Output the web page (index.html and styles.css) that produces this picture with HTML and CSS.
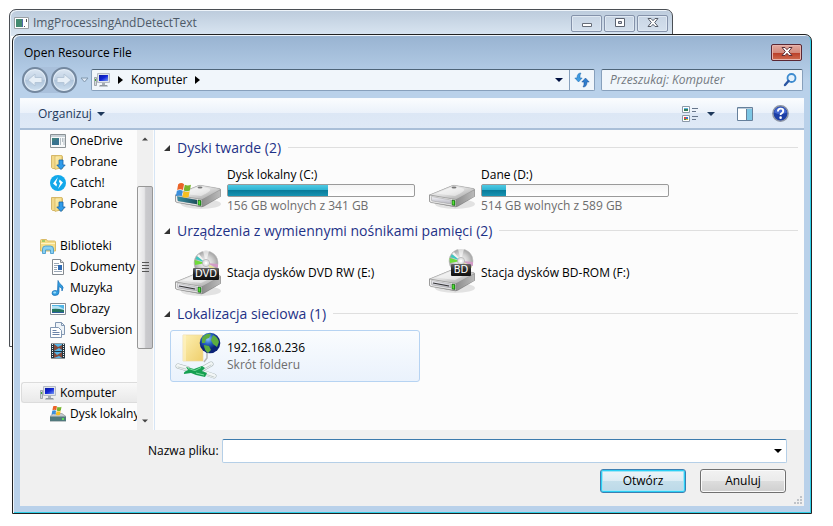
FILE: index.html
```html
<!DOCTYPE html>
<html lang="pl">
<head>
<meta charset="utf-8">
<title>Open Resource File</title>
<link rel="stylesheet" href="styles.css">
</head>
<body>
<svg class="defs" aria-hidden="true">
  <defs>
    <linearGradient id="metal" x1="0" y1="0" x2="1" y2="1"><stop offset="0" stop-color="#fafafa"/><stop offset=".5" stop-color="#dcdcdc"/><stop offset="1" stop-color="#999"/></linearGradient>
    <linearGradient id="side" x1="0" y1="0" x2="1" y2="0"><stop offset="0" stop-color="#8d8d8d"/><stop offset="1" stop-color="#bbb"/></linearGradient>
    <linearGradient id="face" x1="0" y1="0" x2="0" y2="1"><stop offset="0" stop-color="#f4f4f8"/><stop offset="1" stop-color="#b4b4be"/></linearGradient>
    <linearGradient id="teal" x1="0" y1="0" x2="1" y2="0"><stop offset="0" stop-color="#3a90a4"/><stop offset="1" stop-color="#1d4f5c"/></linearGradient>
    <linearGradient id="gold" x1="0" y1="0" x2="1" y2="1"><stop offset="0" stop-color="#fdf0b4"/><stop offset="1" stop-color="#efcf6c"/></linearGradient>
    <linearGradient id="screen" x1="0" y1="0" x2="1" y2="1"><stop offset="0" stop-color="#0a1a9c"/><stop offset=".5" stop-color="#1226d8"/><stop offset="1" stop-color="#7a9cf4"/></linearGradient>
    <radialGradient id="disc-fill"><stop offset="0" stop-color="#fff"/><stop offset=".6" stop-color="#cfcfcf"/><stop offset="1" stop-color="#a2a2a2"/></radialGradient>
    <radialGradient id="sea" cx=".4" cy=".3"><stop offset="0" stop-color="#8fc8fa"/><stop offset=".5" stop-color="#2866c8"/><stop offset="1" stop-color="#0b2377"/></radialGradient>
    <linearGradient id="label" x1="0" y1="0" x2="0" y2="1"><stop offset="0" stop-color="#666"/><stop offset=".5" stop-color="#222"/><stop offset="1" stop-color="#111"/></linearGradient>

    <symbol id="computer" viewBox="0 0 16 16">
      <path d="M.5 5.500h2v8h-2z" fill="#d4d8dc" stroke="#848c92" stroke-width=".7"/><path d="M1 7h1v2H1z" fill="#3ea83c"/>
      <path d="M3.500 1.500h12v9h-12z" fill="#dfe4ea" stroke="#b4bac4"/><path d="M5 3h9v6H5z" fill="url(#screen)"/>
      <path d="M8 11h3v2H8z" fill="#a6adb5"/><path d="M6 13h7l1 1.500H5z" fill="#8f979f"/>
    </symbol>
    <symbol id="folder-down" viewBox="0 0 16 16">
      <path d="M1.500 1.500h9l2 1v12h-10l-1-1z" fill="#f3d98a" stroke="#d5b76a"/><path d="M5 2l7-.5v12l-7 2z" fill="url(#gold)" stroke="#d3b35b" stroke-width=".7"/>
      <path d="M9 6h4v5h2.200L11 15.600 6.800 11H9z" fill="#2f9bea" stroke="#1563a8" stroke-width=".8"/>
    </symbol>
    <symbol id="app" viewBox="0 0 16 16">
      <path d="M.5 1.500h15v13H.5z" fill="#f7f9fa" stroke="#8b9296"/><path d="M1 2h14v2H1z" fill="#c9d1d6"/>
      <path d="M2 5h7v7H2z" fill="#41817f"/><path d="M2 9l7-4v7H2z" fill="#2e61a4" opacity=".45"/>
      <path d="M10.500 5v7M12.500 5v4M14 5v7" stroke="#b4bec4"/>
    </symbol>
    <symbol id="winflag" viewBox="0 0 16 16">
      <path d="M3 2q3-2 5.500 0L7.500 7.500Q5 6 2 7.500z" fill="#ea6328"/><path d="M9.200 2.500q2.800 1.500 5.800 0L14 8q-3 1.500-5.800 0z" fill="#78b52c"/>
      <path d="M1.800 8.200q3-1.500 5.500 0L6.300 13.500Q4 12 .8 13.500z" fill="#3b8fdc"/><path d="M8 8.700q2.800 1.500 5.800 0L12.800 14Q10 15.500 7 14z" fill="#f8bf20"/>
    </symbol>
    <symbol id="drive" viewBox="0 0 48 48">
      <ellipse cx="27" cy="38" rx="20" ry="5" fill="#000" opacity=".1"/>
      <path d="M1 29L24 19.500q2-1 4 0L46 22.500q1 .5 1 2v6L30 40.500q-2 1-4 .5L3 36.500q-2-.5-2-2z" fill="#888"/>
      <path d="M1.500 29L24 19.800q2-.8 4-.3l17 3q2 .5 .5 1.500L29 33q-2 1-4 .5z" fill="url(#metal)" stroke="#aaa" stroke-width=".5"/>
      <path d="M8 27.500l17-7q8 1 11 2.500 2 2-9 7z" fill="#fff" opacity=".45"/><ellipse cx="26" cy="21.500" rx="2.500" ry=".9" fill="#777"/>
      <path d="M28 33.500l18.500-9.500v6.500L28 40.500z" fill="url(#side)"/>
      <path d="M1.500 29L28 33.500v7L3 36.500q-1.500-.5-1.500-2z" fill="#eee" stroke="#888" stroke-width=".6"/>
      <path d="M3.500 30.500L23 34v4L4.500 35q-1 0-1-1z" fill="url(#face)" stroke="#999" stroke-width=".5"/>
      <path d="M24 34l3 .5v5l-3-.5z" fill="#18a818" stroke="#245c1d" stroke-width=".6"/><path d="M25.200 35v3.500" stroke="#79f243"/>
    </symbol>
    <symbol id="disc" viewBox="0 0 26 26">
      <circle cx="13" cy="13" r="12" fill="url(#disc-fill)" stroke="#bbb" stroke-width=".6"/>
      <path d="M13 13L1.500 10l.5 5z" fill="#6fdc3b"/><path d="M13 13L4 6 2.500 9z" fill="#3dc7c0"/><path d="M13 13l-7-9-2 2z" fill="#f4f4f4"/><path d="M13 13l12 1v4z" fill="#d29bc6"/><path d="M13 13l11 6-3 4z" fill="#e6e095"/><path d="M13 13L10 1h6z" fill="#fff" opacity=".6"/>
      <circle cx="13" cy="13" r="3.600" fill="#e5e5e5" stroke="#aaa" stroke-width=".7"/><circle cx="13" cy="13" r="1.500" fill="#fff"/>
    </symbol>
  </defs>
</svg>

<section class="window back-window">
  <header class="back-title">
    <svg class="i16" viewBox="0 0 16 16"><path d="M.5 2.500h14v11H.5z" fill="#fff" stroke="#9aa0a5"/><path d="M2 4h6v8H2z" fill="#438a70"/><path d="M8 4h1v8H8z" fill="#5269a9"/><path d="M10 11h1v1h-1zM12 4h1v3h-1z" fill="#555"/></svg>
    <span>ImgProcessingAndDetectText</span>
    <div class="caption-buttons">
      <button aria-label="Minimalizuj"><svg viewBox="0 0 16 14"><path d="M3.500 7.500h9v3h-9z" fill="#fff" stroke="#666d78"/></svg></button>
      <button aria-label="Maksymalizuj"><svg viewBox="0 0 16 14"><path d="M3.500 2.500h9v8h-9z" fill="#fff" stroke="#5c6370"/><path d="M6.500 5.500h3v2h-3z" fill="#ccd" stroke="#5c6370"/></svg></button>
      <button aria-label="Zamknij"><svg viewBox="0 0 16 14"><path d="M3 2.500h3l2 2.200 2-2.200h3L9.700 6.500l3.300 4h-3L8 8.300 6 10.500H3l3.300-4z" fill="#fff" stroke="#555c68"/></svg></button>
    </div>
  </header>
</section>

<section class="window dialog" role="dialog" aria-labelledby="dialog-title">
  <header class="dialog-title">
    <h1 id="dialog-title">Open Resource File</h1>
    <button class="close" aria-label="Zamknij"><svg viewBox="0 0 16 14"><path d="M3 2.500h3l2 2.200 2-2.200h3L9.700 6.500l3.300 4h-3L8 8.300 6 10.500H3l3.300-4z" fill="#fff" stroke="#5d3038"/></svg></button>
  </header>

  <div class="navigation">
    <div class="travel">
      <button class="round" aria-label="Wstecz"><svg viewBox="0 0 16 16"><path d="M1 8l7-6v3.500h7v5H8V14z" fill="#e7eff7" stroke="#b5c6d8"/></svg></button>
      <button class="round" aria-label="Dalej"><svg viewBox="0 0 16 16"><path d="M15 8L8 2v3.500H1v5h7V14z" fill="#e7eff7" stroke="#b5c6d8"/></svg></button>
    </div>
    <button class="recent" aria-label="Ostatnie strony"><svg viewBox="0 0 9 6"><path d="M1 1h7L4.500 5z" fill="#dfeaf6" stroke="#8298ae"/></svg></button>
    <div class="address">
      <svg class="i16"><use href="#computer"/></svg>
      <svg class="crumb" viewBox="0 0 5 8"><path d="M0 0l5 4-5 4z"/></svg>
      <a href="#">Komputer</a>
      <svg class="crumb" viewBox="0 0 5 8"><path d="M0 0l5 4-5 4z"/></svg>
      <button class="history" aria-label="Poprzednie lokalizacje"><svg viewBox="0 0 8 4"><path d="M0 0h8L4 4z" fill="#001040"/></svg></button>
      <button class="refresh" aria-label="Odśwież"><svg class="i16" viewBox="0 0 16 16"><path d="M7 1Q3 1 3 6H.8l3.700 4 3.700-4H6Q5.600 2.500 7 1z" fill="#3f9be0" stroke="#1b66ae" stroke-width=".5"/><path d="M9 15q4 0 4-5h2.200l-3.700-4-3.700 4H10q.4 3.500-1 5z" fill="#2f7ccc" stroke="#174f98" stroke-width=".5"/></svg></button>
    </div>
    <div class="search">
      <input type="search" placeholder="Przeszukaj: Komputer" aria-label="Przeszukaj: Komputer">
      <svg class="i16" viewBox="0 0 16 16"><circle cx="9.500" cy="6" r="4" fill="#e4f1fc" stroke="#3d8bcf" stroke-width="1.800"/><path d="M6.500 9L3 13" stroke="#2a55a2" stroke-width="2.400" stroke-linecap="round"/></svg>
    </div>
  </div>

  <div class="client">
    <div class="commands">
      <button class="organize">Organizuj <svg viewBox="0 0 8 4"><path d="M0 0h8L4 4z" fill="#1e395b"/></svg></button>
      <button class="views" aria-label="Zmień widok">
        <svg class="i16" viewBox="0 0 16 16"><path d="M.5.500h7v6h-7zM.5 9.500h7v6h-7z" fill="#fff" stroke="#8b99a8"/><path d="M2 2h4v1H2z" fill="#58b3df"/><path d="M2 3h4v2H2z" fill="#347c58"/><path d="M2 11h2v2H2z" fill="#d44"/><path d="M4 11h2v2H4z" fill="#357cca"/><path d="M2 13h2v1H2z" fill="#3a983a"/><path d="M4 13h2v1H4z" fill="#ddb52e"/><path d="M10 2.500h6M10 5.500h4M10 10.500h6M10 13.500h4" stroke="#66758b"/></svg>
        <svg class="down" viewBox="0 0 8 4"><path d="M0 0h8L4 4z" fill="#1e395b"/></svg>
      </button>
      <button class="preview" aria-label="Okienko podglądu"><svg class="i16" viewBox="0 0 16 16"><path d="M.5 1.500h15v13H.5z" fill="#fff" stroke="#66809b"/><path d="M1 2h14v1H1z" fill="#bccbd9"/><path d="M10 3h5v11h-5z" fill="#7cc6e4"/><path d="M9.500 3v11" stroke="#66809b"/></svg></button>
      <button class="help" aria-label="Pomoc"><svg viewBox="0 0 16 16"><circle cx="8" cy="8" r="7.200" fill="#1d3fa6" stroke="#8e96a5" stroke-width="1.400"/><path d="M2 7q1-5 6-5t6 5q-6 3-12 0z" fill="#4468d0"/><path d="M5.600 6q0-2.600 2.500-2.600T10.600 5.600Q10.600 7 9 7.800q-.9.500-.9 1.600" fill="none" stroke="#fff" stroke-width="1.800"/><circle cx="8.100" cy="11.900" r="1.200" fill="#fff"/></svg></button>
    </div>

    <div class="browser">
      <nav class="tree" aria-label="Okienko nawigacji">
        <a class="sub" href="#"><svg class="i16"><use href="#app"/></svg>OneDrive</a>
        <a class="sub" href="#"><svg class="i16"><use href="#folder-down"/></svg>Pobrane</a>
        <a class="sub" href="#"><svg class="i16" viewBox="0 0 16 16"><circle cx="8" cy="8" r="8" fill="#12a8ea"/><path d="M8 2L3 8.500l3.500 3L7 9 5.800 8z" fill="#fff"/><path d="M8 14l5-6.500-3.500-3L9 7l1.200 1z" fill="#fff"/></svg>Catch!</a>
        <a class="sub" href="#"><svg class="i16"><use href="#folder-down"/></svg>Pobrane</a>
        <a class="top" href="#"><svg class="i16" viewBox="0 0 16 16"><path d="M.5 2.500q0-1 1-1h5l1 1.500h7q1 0 1 1v9H.5z" fill="#f6dd87" stroke="#d9bb68"/><path d="M2 3h3" stroke="#55b84a"/><path d="M1 5.500h14" stroke="#fff3c1"/><path d="M2.500 15.500V11q0-3 3-3h5q3 0 3 3v4.500h-3V12h-5v3.500z" fill="#8ad0f1" stroke="#3b94c9" stroke-width=".8"/></svg>Biblioteki</a>
        <a class="sub" href="#"><svg class="i16" viewBox="0 0 16 16"><path d="M2.500.500h8l3 3v12h-11z" fill="#fff" stroke="#858b91"/><path d="M10.500.500v3h3" fill="#ddd" stroke="#858b91"/><path d="M4 4.500h5M4 6.500h4M4 8.500h3M4 10.500h3M4 12.500h8" stroke="#9ba8b7"/><path d="M8 6h4v5H8z" fill="#2f6bb3"/></svg>Dokumenty</a>
        <a class="sub" href="#"><svg class="i16" viewBox="0 0 16 16"><path d="M8 .5q1 3 3.500 4.500Q14.500 7 12 11q.5-3.500-3-4.500V12q0 3.500-4 3.500-3 0-3-2.300Q2 10.500 5 10.500q1.500 0 2.500.5z" fill="#329ee0" stroke="#1a6eb5" stroke-width=".7"/><ellipse cx="4.700" cy="12.500" rx="1.500" ry="1" fill="#9cdbf8"/></svg>Muzyka</a>
        <a class="sub" href="#"><svg class="i16" viewBox="0 0 16 16"><path d="M.5 2.500h15v11H.5z" fill="#fff" stroke="#868d94"/><path d="M2 4h12v8H2z" fill="#51b5e5"/><path d="M2 5h6l6 3v1H2z" fill="#b5e2f4"/><path d="M2 8q5-1 12 1v3H2z" fill="#267660"/><path d="M2 11h12v1H2z" fill="#2d5f9e"/></svg>Obrazy</a>
        <a class="sub" href="#"><svg class="i16" viewBox="0 0 16 16"><path d="M5.500.500h6l3 3v9h-9z" fill="#eef3f8" stroke="#8297b2"/><path d="M11.500.500v3h3" fill="none" stroke="#8297b2"/><path d="M.5 5.500h8l3 3v7H.5z" fill="#fff" stroke="#8297b2"/><path d="M2.500 8.500h4M2.500 10.500h7M2.500 12.500h7" stroke="#6b83a8"/></svg>Subversion</a>
        <a class="sub" href="#"><svg class="i16" viewBox="0 0 16 16"><path d="M1 .5h14v15H1z" fill="#263640"/><path d="M4 1h8v7H4zM4 9h8v6H4z" fill="#55b6e8"/><path d="M4 1l4 3 4-2v5l-3-2-5 3zM4 9l3 3 5-3v6l-3-2-5 2z" fill="#844b3c"/><path d="M2.500 1v14M13.500 1v14" stroke="#eef2f4" stroke-dasharray="1 1"/></svg>Wideo</a>
        <a class="top selected" href="#"><svg class="i16"><use href="#computer"/></svg>Komputer</a>
        <a class="sub" href="#"><svg class="i16" viewBox="0 0 16 16"><path d="M0 10.500l3-3h9l4 3v4.500H0z" fill="#c4c8cb" stroke="#858a8e" stroke-width=".6"/><path d="M0 10.500h16v4.700H0z" fill="#52797d"/><path d="M12 12h2v2h-2z" fill="#56e05a"/><g transform="translate(1 -1) scale(.7)"><use href="#winflag" width="16" height="16"/></g></svg>Dysk lokalny</a>
      </nav>
      <div class="scrollbar" aria-hidden="true">
        <svg class="arrow" viewBox="0 0 8 4"><path d="M4 0l4 4H0z" fill="#444"/></svg>
        <div class="track"><div class="thumb"><i></i><i></i><i></i><i></i></div></div>
        <svg class="arrow" viewBox="0 0 8 4"><path d="M0 0h8L4 4z" fill="#444"/></svg>
      </div>

      <main class="files">
        <section>
          <h2><svg viewBox="0 0 6 6"><path d="M6 0v6H0z"/></svg><span>Dyski twarde (2)</span></h2>
          <div class="items">
            <a class="item" href="#">
              <svg class="i48" viewBox="0 0 48 48"><use href="#drive" width="48" height="48"/><path d="M3 30.300L23 34v4.200L4 35z" fill="url(#teal)"/><g transform="translate(1 16)"><use href="#winflag" width="17" height="17"/></g></svg>
              <div class="details"><span>Dysk lokalny (C:)</span><div class="usage" role="meter" aria-label="Zajęte miejsce C:" aria-valuenow="54"><div style="width:54%"></div></div><small>156 GB wolnych z 341 GB</small></div>
            </a>
            <a class="item" href="#">
              <svg class="i48"><use href="#drive"/></svg>
              <div class="details"><span>Dane (D:)</span><div class="usage" role="meter" aria-label="Zajęte miejsce D:" aria-valuenow="13"><div style="width:13%"></div></div><small>514 GB wolnych z 589 GB</small></div>
            </a>
          </div>
        </section>
        <section>
          <h2><svg viewBox="0 0 6 6"><path d="M6 0v6H0z"/></svg><span>Urządzenia z wymiennymi nośnikami pamięci (2)</span></h2>
          <div class="items">
            <a class="item" href="#">
              <svg class="i48" viewBox="0 0 48 48"><g transform="translate(0 4)"><use href="#drive" width="48" height="48"/><path d="M5 33l16 3" stroke="#333" stroke-width="1.200"/></g><use href="#disc" x="19" y="1" width="26" height="26"/><rect x="19" y="19" width="26" height="12" rx="1" fill="url(#label)"/><text class="disc-label" x="32" y="28">DVD</text></svg>
              <div class="details"><span>Stacja dysków DVD RW (E:)</span></div>
            </a>
            <a class="item" href="#">
              <svg class="i48" viewBox="0 0 48 48"><g transform="translate(0 1)"><use href="#drive" width="48" height="48"/><path d="M5 33l16 3" stroke="#333" stroke-width="1.200"/></g><use href="#disc" x="20" y="-1" width="26" height="26"/><rect x="23" y="15" width="20" height="12" rx="1" fill="url(#label)"/><text class="disc-label" x="33" y="24">BD</text></svg>
              <div class="details"><span>Stacja dysków BD-ROM (F:)</span></div>
            </a>
          </div>
        </section>
        <section>
          <h2><svg viewBox="0 0 6 6"><path d="M6 0v6H0z"/></svg><span>Lokalizacja sieciowa (1)</span></h2>
          <div class="items">
            <a class="item active" href="#">
              <svg class="i48" viewBox="0 0 48 48">
                <path d="M9 3h20v26H9z" fill="url(#gold)" stroke="#ecd9a0" stroke-width=".7"/><path d="M9 3h3v26H9z" fill="#fff4c8" opacity=".6"/>
                <path d="M33 20v6l-3 4" fill="none" stroke="#b7b7b7" stroke-width="1.500"/>
                <circle cx="36" cy="11" r="10.300" fill="url(#sea)"/><path d="M28 6q4-5 9-4l-2 4-3 1-1 4-3 0zM30 13l5 1 2 4-3 3q-4-3-4-8zM39 3q5 2 6 7l-2 5-4-3-2-4z" fill="#5cac3f"/>
                <path d="M4 34l10 3M30 36l7-4M31 41l9 3" stroke="#a9b4b4" stroke-width="5" stroke-linecap="round"/><path d="M4 34l10 3M30 36l7-4M31 41l9 3" stroke="#f2f6f6" stroke-width="4" stroke-linecap="round"/><path d="M4 35l8 2M30 37l7-4M31 42l9 3" stroke="#c5cfcf" stroke-linecap="round"/>
                <path d="M12 35l8 2 8-3 3 2-3 3 5 2-2 4-9-2-5-2-7 1q-1-2 4-4z" fill="#17a052"/><path d="M14 36.500l7 2 6-3M22 41l8 2" stroke="#7bdc9c" fill="none"/>
              </svg>
              <div class="details"><span>192.168.0.236</span><small>Skrót folderu</small></div>
            </a>
          </div>
        </section>
      </main>
    </div>

    <footer>
      <div class="filename">
        <label for="filename">Nazwa pliku:</label>
        <div class="combo"><input id="filename" type="text"><button aria-label="Ostatnie pliki"><svg viewBox="0 0 8 4"><path d="M0 0h8L4 4z"/></svg></button></div>
      </div>
      <div class="actions"><button class="push default">Otwórz</button><button class="push">Anuluj</button></div>
      <svg class="grip" viewBox="0 0 9 9"><path d="M7 0h2v2H7zM7 3h2v2H7zM7 6h2v2H7zM4 3h2v2H4zM4 6h2v2H4zM1 6h2v2H1z" fill="#bfc3c8"/></svg>
    </footer>
  </div>
</section>
</body>
</html>
```
FILE: styles.css
```css
* { box-sizing: border-box; }

body {
  margin: 0;
  min-height: 100vh;
  position: relative;
  background: #fff;
  color: #000;
  font: 12px/16px "Open Sans", "Noto Sans", sans-serif;
}

a { color: inherit; text-decoration: none; }
svg { display: block; flex: none; }
button, input { font: inherit; color: inherit; }
button { display: flex; align-items: center; justify-content: center; padding: 0; border: 0; background: none; flex: none; }
.defs { position: absolute; width: 0; height: 0; }
.i16 { width: 16px; height: 16px; }
.i48 { width: 48px; height: 48px; }

/* Windows on the desktop */
.window { position: absolute; border: 1px solid #222; border-radius: 7px 7px 0 0; }
.back-window {
  top: 9px; left: 9px; right: 160px; bottom: 179px;
  border-color: #4b4f55;
  background: linear-gradient(#bccbdc, #dae6f2 26px, #fff 26px);
  box-shadow: inset 1px 1px #eef4fa;
}
.dialog {
  top: 34px; left: 12px; right: 21px; bottom: 12px;
  display: flex;
  flex-direction: column;
  padding: 0 7px 7px;
  background: linear-gradient(#98b3d1, #b9d1ea 46px);
  box-shadow: inset 1px 1px #f0f6fb, inset -1px -1px #30cfe8;
}

.back-title { display: flex; align-items: center; gap: 3px; height: 26px; padding: 0 4px; color: #4e5a68; }
.caption-buttons { display: flex; gap: 2px; margin-left: auto; }
.caption-buttons button { width: 31px; height: 17px; border: 1px solid #8492aa; border-radius: 2px; background: linear-gradient(#c8d5e4, #d4e0ed); box-shadow: inset 0 0 0 1px #dfe8f2; }
.caption-buttons svg, .close svg { width: 16px; height: 14px; }

.dialog-title { display: flex; align-items: center; justify-content: space-between; height: 34px; padding: 0 2px 0 4px; }
.dialog-title h1 { margin: 0; padding-top: 2px; font-size: 12px; font-weight: 400; }
.close { width: 31px; height: 17px; border: 1px solid #5b2733; border-radius: 2px; background: linear-gradient(#e3a99f, #d38a7d 50%, #b83a25 50%, #cf6c50); box-shadow: inset 0 0 0 1px #e8b3ac; }

/* Navigation row */
.navigation { display: flex; align-items: center; height: 22px; margin-bottom: 7px; }
.travel { display: flex; gap: 3px; margin-left: 2px; border-radius: 14px; background: #a9c0db; }
.round { width: 26px; height: 26px; border: 2px solid #74889f; border-radius: 50%; background: linear-gradient(#dbe6f2, #bfd0e3 50%, #adc3da 50%, #cfe0f0); box-shadow: inset 0 0 0 1px #e3edf7; }
.round svg { width: 16px; height: 16px; }
.recent { width: 14px; }
.recent svg { width: 9px; height: 6px; }
.address, .search { display: flex; align-items: center; height: 22px; border: 1px solid #87a0bc; border-top-color: #4e6478; border-radius: 2px; background: #f1f6fb; }
.address { flex: 1; padding-left: 2px; }
.address .crumb { width: 5px; height: 8px; margin: 0 8px; }
.history { width: 20px; height: 20px; margin-left: auto; }
.history svg, .organize svg, .down, .combo svg { width: 8px; height: 4px; }
.refresh { width: 25px; height: 20px; border-left: 1px solid #87a0bc; }
.search { flex: 0 1 202px; margin: 0 1px 0 6px; padding: 0 4px 0 8px; }
.search input { flex: 1; width: 0; padding: 0; border: 0; outline: 0; background: none; font-style: italic; }
.search input::placeholder { color: #737980; opacity: 1; }

/* Client area */
.client { display: flex; flex: 1; flex-direction: column; min-height: 0; background: #fcfcfc; }
.commands { display: flex; align-items: center; height: 32px; flex: none; padding: 0 15px 0 18px; border-top: 1px solid #f8fbfe; border-bottom: 2px solid #a9bfd8; background: linear-gradient(#fafcfe, #eaf1fa 50%, #dce7f5 50%, #dee9f6); color: #1e395b; }
.organize { gap: 5px; }
.views { gap: 9px; margin-left: auto; }
.preview { margin-left: 22px; }
.help { margin-left: 19px; }
.help svg { width: 17px; height: 17px; }
.browser { display: flex; flex: 1; min-height: 0; }

.tree { display: flex; flex-direction: column; width: 117px; }
.tree a { display: flex; align-items: center; gap: 4px; height: 21px; flex: none; white-space: nowrap; }
.tree .sub { padding-left: 30px; }
.tree .top { margin-top: 21px; padding-left: 20px; }
.tree .selected { margin-left: 1px; padding-left: 18px; border: 1px solid #dcdcdc; border-right: 0; border-radius: 3px 0 0 3px; background: linear-gradient(#f9f9f9, #e9e9e9); }

.scrollbar { display: flex; flex-direction: column; align-items: center; width: 16px; flex: none; background: #f0f0f0; }
.scrollbar .arrow { width: 6px; height: 4px; margin: 7px 0; }
.track { display: flex; flex: 1; flex-direction: column; align-self: stretch; }
.track::before { content: ""; flex: 38; }
.track::after { content: ""; flex: 63; }
.thumb { display: flex; flex: 163; flex-direction: column; align-items: center; justify-content: center; gap: 1px; border: 1px solid #979797; border-radius: 2px; background: linear-gradient(90deg, #f5f5f5, #e6e6e8 45%, #cacacd 55%, #c5c5c9); }
.thumb i { width: 7px; height: 1px; margin-bottom: 1px; background: #555; }

.files { flex: 1; min-width: 0; margin-left: 1px; padding: 3px 6px 0 9px; border-left: 1px solid #d6e5f5; }
.files h2 { display: flex; align-items: center; gap: 7px; height: 31px; margin: 0; padding-bottom: 2px; color: #1e3287; font-size: 14px; font-weight: 400; line-height: 20px; white-space: nowrap; }
.files h2 svg { width: 6px; height: 6px; fill: #333; }
.files h2::after { content: ""; flex: 1; height: 1px; background: #dfdfdf; }
.items { display: flex; gap: 4px; padding-left: 6px; }
.item { display: flex; align-items: center; gap: 5px; width: 250px; height: 52px; padding: 0 3px; border: 1px solid transparent; border-radius: 3px; }
.item.active { border-color: #b6d3f2; background: linear-gradient(#fafcfe, #eaf2fc); }
.details { display: flex; flex: 1; flex-direction: column; gap: 1px; min-width: 0; white-space: nowrap; }
.details small { color: #6d6d6d; font-size: 12px; }
.usage { width: 188px; height: 13px; border: 1px solid #9a9a9a; border-radius: 2px; background: linear-gradient(#f4f4f4, #fff); }
.usage div { height: 100%; background: linear-gradient(#4fc9e3, #29b0d0 50%, #0a7c9b 50%, #1794b3); }
.disc-label { fill: #fff; font: 10px "DejaVu Sans", sans-serif; text-anchor: middle; }

/* File name and actions */
footer { position: relative; height: 76px; flex: none; padding: 9px 17px 0 128px; background: #f0f0f0; }
.filename { display: flex; align-items: center; gap: 3px; }
.filename label { flex: none; }
.combo { display: flex; flex: 1; height: 24px; border: 1px solid #b5cfe7; border-top-color: #3d7bad; border-radius: 2px; background: #fff; }
.combo input { flex: 1; min-width: 0; padding: 0 4px; border: 0; outline: 0; background: none; }
.combo button { width: 17px; }
.actions { display: flex; justify-content: flex-end; gap: 14px; margin: 6px 1px 0 0; }
.push { width: 86px; height: 24px; border: 1px solid #707070; border-radius: 3px; background: linear-gradient(#f2f2f2, #ebebeb 50%, #dddddd 50%, #cfcfcf); box-shadow: inset 0 0 0 1px #fafafa; }
.push.default { border-color: #3c7fb1; background: linear-gradient(#edf5f9, #dcecf4 50%, #c5dfeb 50%, #bcd9e8); box-shadow: inset 0 0 0 1px #2bd0f5, inset 0 0 0 2px #a3e4f5; }
.grip { position: absolute; right: 2px; bottom: 1px; width: 9px; height: 9px; }
```
